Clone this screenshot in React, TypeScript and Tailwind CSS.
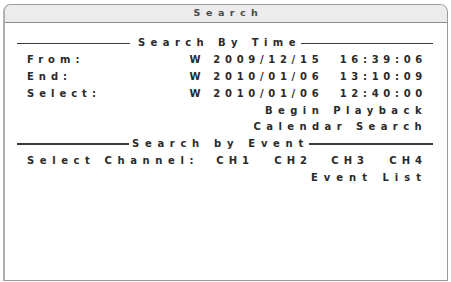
import React from "react";

const Header = ({ label, left, gapL, track }: { label: string; left: string; gapL: string; track: string }) => (
  <div className="h-[16.8px] flex items-center">
    <div className={`${left} h-[1.5px] bg-[#3a3a3a]`} />
    <span className={`${gapL} ${track}`}>{label}</span>
    <div className="flex-1 h-[1.5px] bg-[#3a3a3a]" />
  </div>
);

const Row = ({ label, value, track = "" }: { label?: string; value: React.ReactNode; track?: string }) => (
  <div className="h-[16.8px] flex items-center justify-between pl-[10px] pr-[6px] whitespace-pre">
    <span>{label}</span>
    <span className={track}>{value}</span>
  </div>
);

export default function App() {
  return (
    <div className="w-[451px] h-[282px] bg-white pt-[4px] px-[3px] pb-[1px]">
      <div className="h-full flex flex-col border border-[#9a9a9a] border-l-2 border-l-[#b0b0b0] rounded-t-[8px] overflow-hidden">
        <div className="h-[18px] shrink-0 bg-[#ececec] border-b border-[#8a8a8a] flex items-center justify-center font-['DejaVu_Sans',sans-serif] text-[9.5px] font-bold tracking-[5.5px] text-[#4a4a4a] pl-[5px]">
          Search
        </div>
        <div className="flex-1 bg-white pt-[12px] pl-[12px] pr-[14px] font-['DejaVu_Sans',sans-serif] text-[10px] font-bold tracking-[5px] text-[#2a2a2a] leading-none">
          <Header label="Search By Time" left="w-[113px]" gapL="ml-[8px]" track="tracking-[5.4px]" />
          <Row label="From:" value="W 2009/12/15  16:39:06" track="tracking-[4.7px]" />
          <Row label="End:" value="W 2010/01/06  13:10:09" track="tracking-[4.7px]" />
          <Row label="Select:" value="W 2010/01/06  12:40:00" track="tracking-[4.7px]" />
          <Row value="Begin Playback" track="tracking-[5.45px]" />
          <Row value="Calendar Search" track="tracking-[5.4px]" />
          <Header label="Search by Event" left="w-[112px]" gapL="ml-[3px]" track="tracking-[5.7px]" />
          <div className="h-[16.8px] flex items-center pl-[10px] pr-[6px]">
            <span className="tracking-[5.6px]">Select Channel:</span>
            <div className="flex-1 flex justify-end">
              <span className="w-[58px]">CH1</span>
              <span className="w-[57px]">CH2</span>
              <span className="w-[58px]">CH3</span>
              <span>CH4</span>
            </div>
          </div>
          <Row value="Event List" track="tracking-[6px]" />
        </div>
      </div>
    </div>
  );
}
